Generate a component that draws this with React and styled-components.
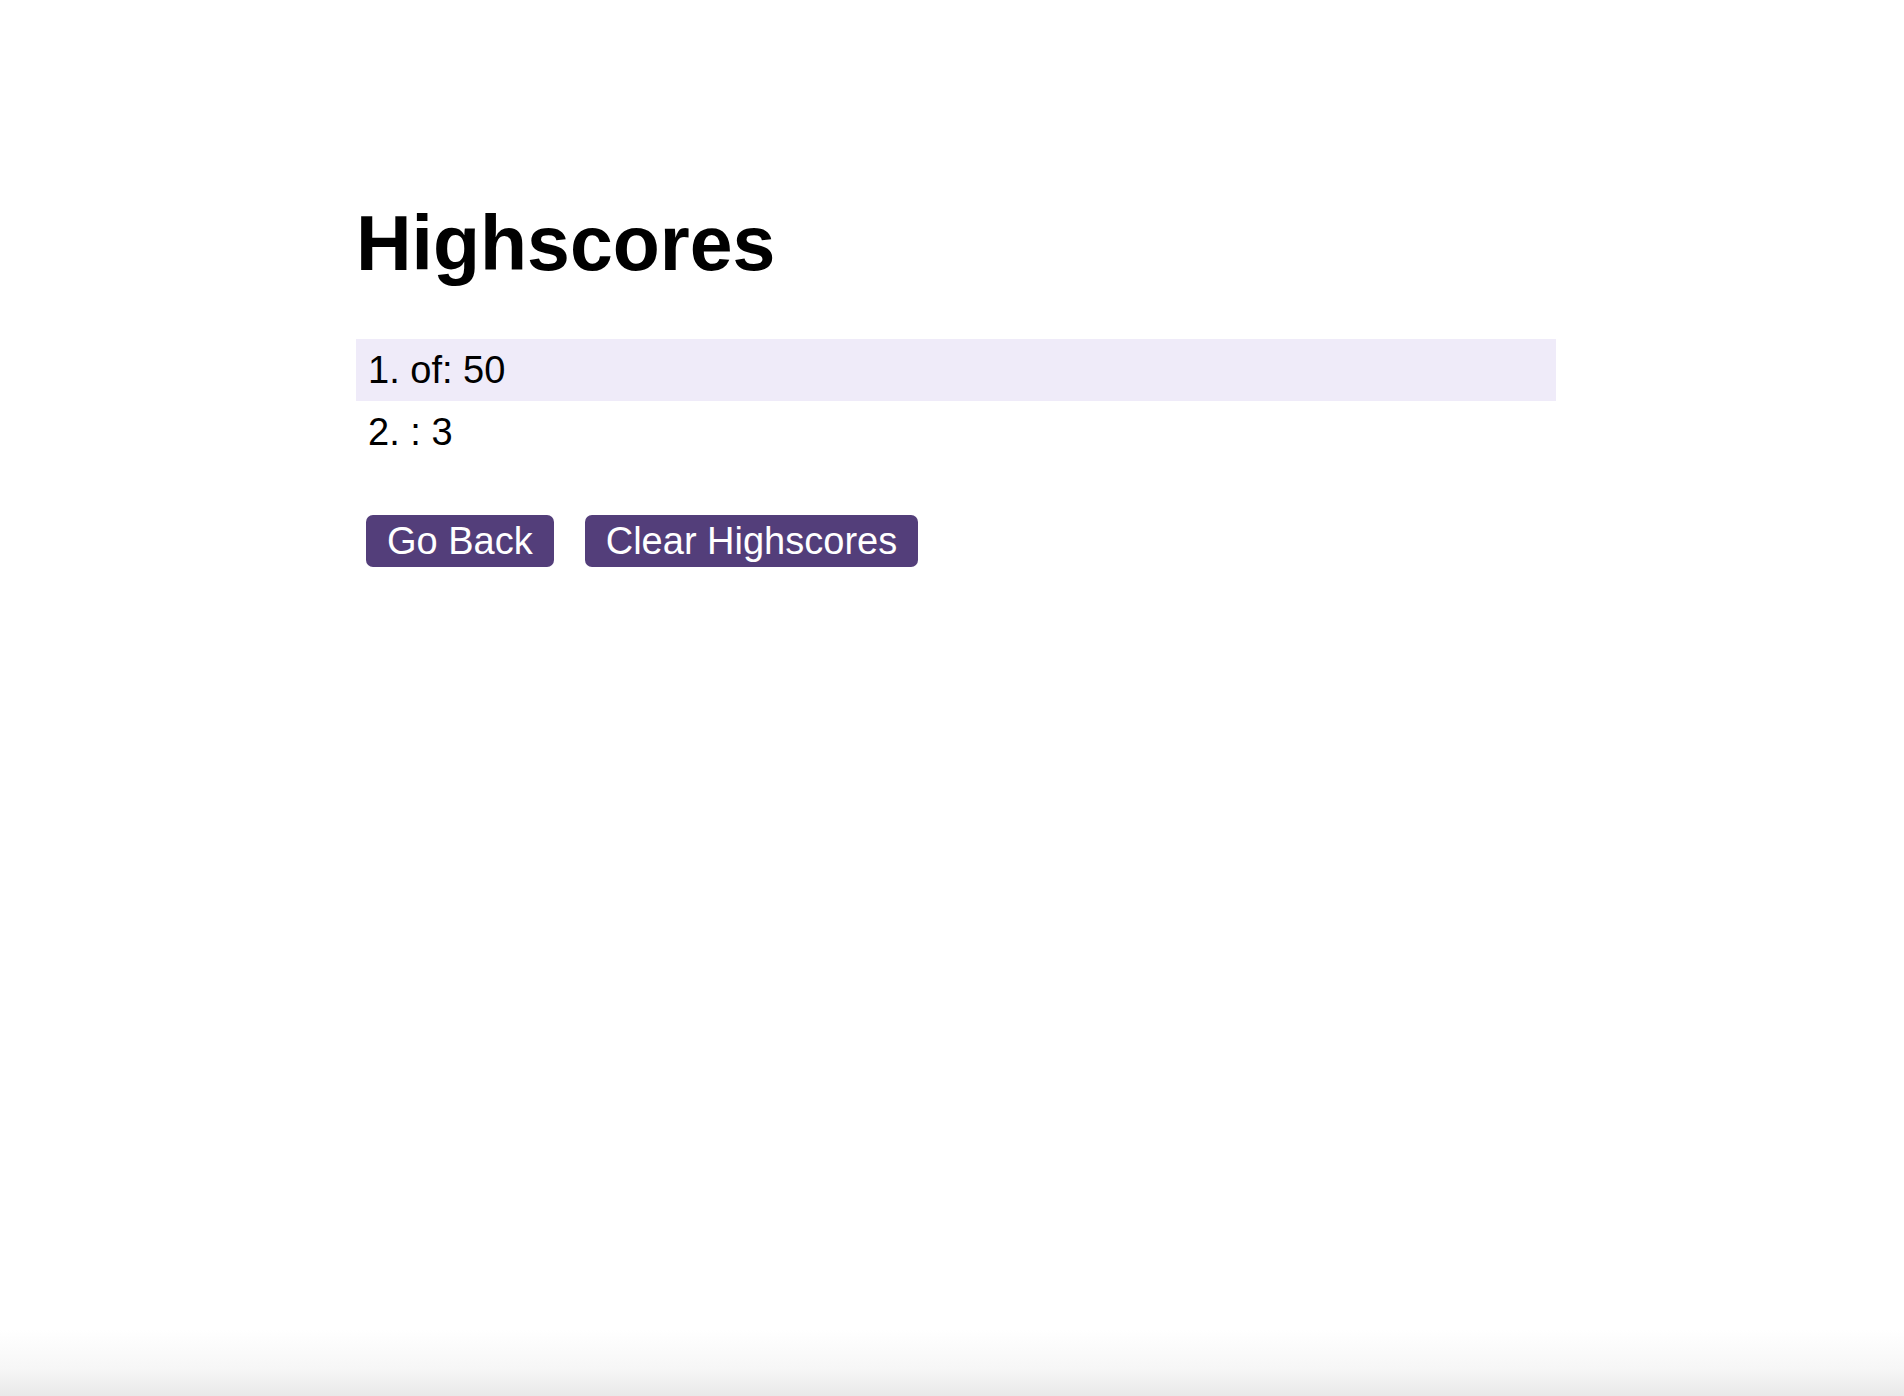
import React from 'react';
import styled, { createGlobalStyle } from 'styled-components';

const GlobalStyle = createGlobalStyle`
  html {
    min-height: 100%;
    background: linear-gradient(
      to bottom,
      #ffffff 0,
      #ffffff 1330px,
      #f6f6f6 1370px,
      #e9e9e9 1396px
    );
  }

  body {
    margin: 0;
    padding: 0 0 0 8px;
    font-family: 'Liberation Sans', Arial, Helvetica, sans-serif;
    color: #000;
  }
`;

const Wrapper = styled.main`
  width: 1200px;
  margin: 0 auto;
  padding-top: 200px;
`;

const Title = styled.h1`
  margin: 0 0 52px 0;
  font-size: 77px;
  line-height: 87px;
  font-weight: bold;
`;

const ScoreList = styled.ol`
  list-style: none;
  margin: 0;
  padding: 0;
`;

const ScoreRow = styled.li`
  padding: 9px 12px;
  font-size: 38px;
  line-height: 44px;
  background-color: ${props => (props.highlight ? '#efebf9' : 'transparent')};
`;

const Actions = styled.div`
  display: flex;
  gap: 31px;
  margin: 52px 0 0 10px;
`;

const Button = styled.button`
  font-family: inherit;
  font-size: 38px;
  line-height: 42px;
  padding: 5px 21px;
  border: none;
  border-radius: 7px;
  color: #ffffff;
  background-color: #533e7a;
  cursor: pointer;

  &:hover {
    background-color: #6a52a0;
  }
`;

const scores = [
  { initials: 'of', score: 50 },
  { initials: '', score: 3 },
];

export default function App() {
  return (
    <>
      <GlobalStyle />
      <Wrapper>
        <Title>Highscores</Title>
        <ScoreList>
          {scores.map((entry, i) => (
            <ScoreRow key={i} highlight={i % 2 === 0}>
              {i + 1}. {entry.initials}: {entry.score}
            </ScoreRow>
          ))}
        </ScoreList>
        <Actions>
          <Button>Go Back</Button>
          <Button>Clear Highscores</Button>
        </Actions>
      </Wrapper>
    </>
  );
}
